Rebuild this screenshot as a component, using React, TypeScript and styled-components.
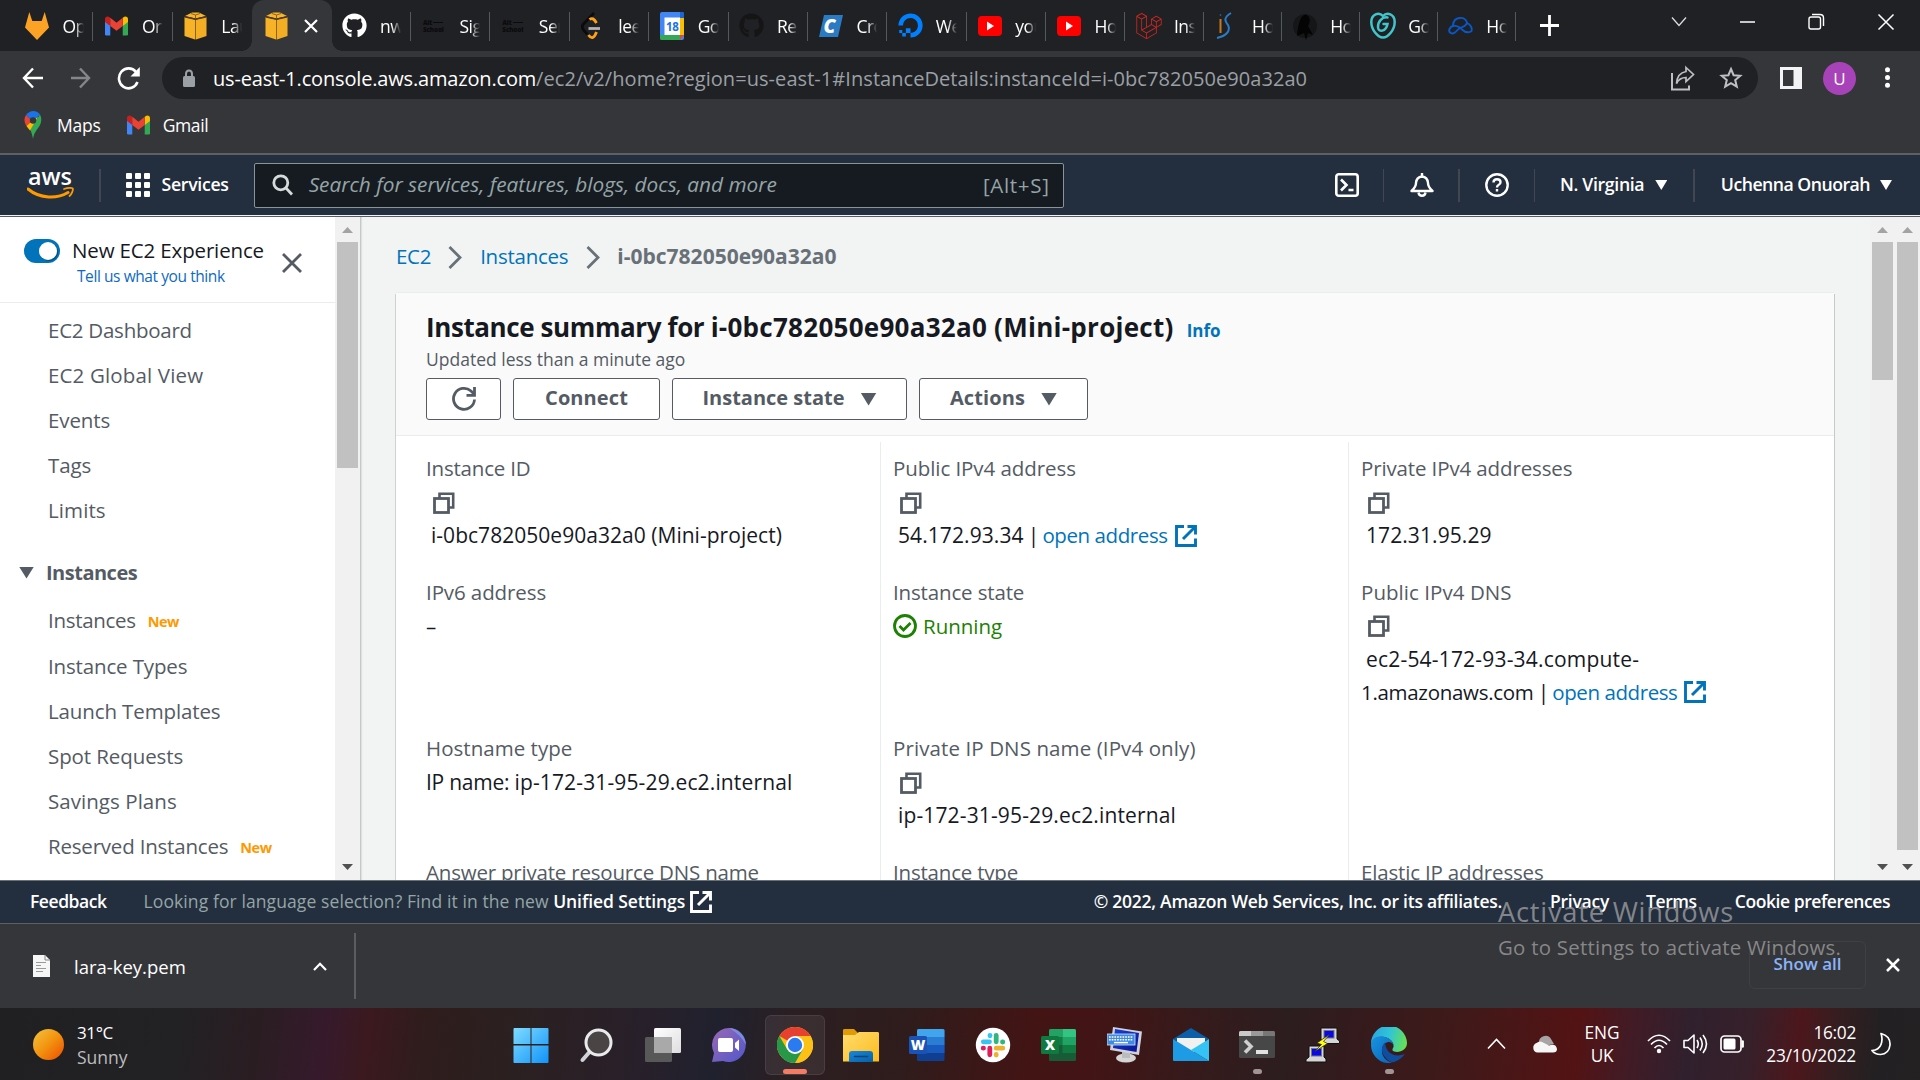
import React from 'react';
import styled, { createGlobalStyle, css } from 'styled-components';
import { FaGithub, FaDigitalOcean, FaLaravel } from 'react-icons/fa';

const Global = createGlobalStyle`
  *, *::before, *::after { box-sizing: border-box; }
  html, body { margin: 0; padding: 0; overflow: hidden; }
  body { font-family: "Open Sans", "Noto Sans", sans-serif; }
  svg { display: block; flex: none; }
`;

const Screen = styled.div`
  position: relative;
  width: 1920px;
  height: 1080px;
  overflow: hidden;
  display: flex;
  flex-direction: column;
  background: #202124;
`;

const T = styled.span<{ $s?: number; $ls?: number; $w?: number; $c?: string; $italic?: boolean; $ml?: number }>`
  font-size: ${p => p.$s ?? 20.5}px;
  letter-spacing: ${p => p.$ls ?? 0}px;
  font-weight: ${p => p.$w ?? 400};
  margin-left: ${p => p.$ml ?? 0}px;
  white-space: pre;
  ${p => p.$c && css`color: ${p.$c};`}
  ${p => p.$italic && css`font-style: italic;`}
`;

const Gap = styled.i<{ $w: number }>`flex: none; width: ${p => p.$w}px;`;

/* ---------- browser chrome ---------- */

const TabStrip = styled.div`
  height: 51px;
  flex: none;
  display: flex;
  padding-left: 14px;
  background: #202124;
  color: #fff;
`;

const Tab = styled.div<{ $w: number; $active?: boolean; $line: boolean }>`
  position: relative;
  flex: none;
  width: ${p => p.$w}px;
  height: 51px;
  display: flex;
  align-items: center;
  gap: 13px;
  padding-left: 10.5px;
  ${p => p.$active && css`
    gap: 15px;
    padding-left: 12px;
    background: #35363a;
    border-radius: 12px 12px 0 0;
    &::before, &::after {
      content: '';
      position: absolute;
      bottom: 0;
      width: 10px;
      height: 10px;
    }
    &::before { left: -10px; background: radial-gradient(circle at 0 0, transparent 9.5px, #35363a 10px); }
    &::after { right: -10px; background: radial-gradient(circle at 100% 0, transparent 9.5px, #35363a 10px); }
  `}
  ${p => p.$line && css`
    &::after {
      content: '';
      position: absolute;
      right: 0;
      top: 12px;
      width: 1px;
      height: 29px;
      background: #55585c;
    }
  `}
`;

const TabIcon = styled.div`
  width: 25px;
  height: 28px;
  flex: none;
  display: grid;
  place-items: center;
`;

const TabTitle = styled.div`
  width: 21px;
  overflow: hidden;
  white-space: nowrap;
  font-size: 17.5px;
  letter-spacing: -0.5px;
  mask-image: linear-gradient(90deg, #000 55%, transparent 100%);
`;

const NewTab = styled.div`
  display: flex;
  align-items: center;
  margin-left: 24px;
`;

const WindowControls = styled.div`
  margin-left: auto;
  display: flex;
  align-items: flex-start;
  gap: 45px;
  padding: 10px 22px 0 0;
`;

const Toolbar = styled.div`
  height: 54px;
  flex: none;
  display: flex;
  align-items: center;
  padding: 0 27px 0 20px;
  background: #35363a;
`;

const NavButtons = styled.div`
  display: flex;
  align-items: center;
  gap: 24px;
  width: 142px;
`;

const Omnibox = styled.div`
  width: 1596px;
  height: 42px;
  display: flex;
  align-items: center;
  padding: 0 15px 0 20px;
  border-radius: 21px;
  background: #202124;
  color: #fff;
`;

const OmniActions = styled.div`
  margin-left: auto;
  display: flex;
  align-items: center;
  gap: 24px;
`;

const ToolbarEnd = styled.div`
  margin-left: auto;
  display: flex;
  align-items: center;
`;

const Avatar = styled.div`
  width: 33px;
  height: 33px;
  margin: 0 26px 0 21px;
  border-radius: 50%;
  display: grid;
  place-items: center;
  background: #a842b8;
  color: #fff;
  font-size: 17px;
`;

const Bookmarks = styled.div`
  height: 50px;
  flex: none;
  display: flex;
  align-items: center;
  padding: 0 0 8px 24px;
  border-bottom: 2px solid #5f6063;
  background: #35363a;
  color: #fff;
`;

const Bookmark = styled.div<{ $gap: number }>`
  display: flex;
  align-items: center;
  gap: ${p => p.$gap}px;
  margin-right: 26px;
`;

/* ---------- AWS header ---------- */

const AwsNav = styled.header`
  height: 60px;
  flex: none;
  display: flex;
  align-items: center;
  padding: 0 28px 0 27px;
  background: #232f3e;
  color: #fff;
  & > span, & > div > span { position: relative; top: -1px; }
`;

const NavRule = styled.div<{ $l?: number; $r?: number }>`
  width: 1.5px;
  height: 33px;
  margin: 0 ${p => p.$r ?? 25}px 0 ${p => p.$l ?? 25}px;
  background: #414750;
`;

const ServiceGrid = styled.div`
  display: grid;
  grid-template-columns: repeat(3, 6px);
  grid-template-rows: repeat(3, 6px);
  gap: 3px;
  & > i { background: #fff; border-radius: 1px; }
`;

const SearchBox = styled.div`
  width: 810px;
  height: 45px;
  display: flex;
  align-items: center;
  margin-left: 25px;
  padding: 0 13px 0 17px;
  border: 1px solid #879596;
  border-radius: 2px;
  background: #161b22;
  color: #95a5a6;
`;

const Push = styled.div`margin-left: auto; display: flex; align-items: center;`;

const Down = styled.i<{ $w?: number; $h?: number; $ml?: number }>`
  width: ${p => p.$w ?? 12}px;
  height: ${p => p.$h ?? 10}px;
  margin-left: ${p => p.$ml ?? 0}px;
  background: currentColor;
  clip-path: polygon(0 0, 100% 0, 50% 100%);
`;

const NavEdge = styled.div`
  height: 2px;
  flex: none;
  border-top: 1px solid #f2f3f3;
  background: #545b64;
`;

/* ---------- body ---------- */

const Body = styled.div`
  height: 663px;
  flex: none;
  display: flex;
  overflow: hidden;
  background: #f2f3f3;
`;

const Sidebar = styled.aside`
  width: 335px;
  background: #fff;
  color: #545b64;
`;

const SideHead = styled.div`
  height: 86px;
  display: flex;
  align-items: flex-start;
  padding: 22px 0 0 24px;
  border-bottom: 1px solid #eaeded;
`;

const Toggle = styled.div`
  width: 36px;
  height: 24px;
  border-radius: 12px;
  background: #0073bb;
  padding: 3px;
  display: flex;
  justify-content: flex-end;
  & > i { width: 18px; height: 18px; border-radius: 50%; background: #fff; box-shadow: 1px 1px 1px rgba(0,0,0,.35); }
`;

const SideTitles = styled.div`
  width: 198px;
  margin: -2px 0 0 12px;
  display: flex;
  flex-direction: column;
  line-height: 26px;
  & > span { height: 26px; }
`;

const SideClose = styled.div`margin: 14px 0 0 12px;`;

const SideList = styled.nav`
  padding-top: 4px;
`;

const SideRow = styled.div<{ $h?: number }>`
  height: ${p => p.$h ?? 45}px;
  display: flex;
  align-items: center;
  padding-left: 48px;
`;

const SideGroup = styled.div`
  height: 47px;
  margin-top: 17px;
  display: flex;
  align-items: center;
  padding-left: 19px;
  gap: 12px;
`;

const NewTag = styled.span`
  margin: 3px 0 0 12px;
  font-size: 14.5px;
  font-weight: 700;
  letter-spacing: -0.5px;
  color: #ff9900;
`;

const Track = styled.div<{ $edge?: boolean }>`
  width: 25px;
  flex: none;
  display: flex;
  flex-direction: column;
  align-items: center;
  background: #f1f1f1;
  ${p => p.$edge && css`width: 26px; border-right: 1px solid #c3c9c9; box-shadow: 1px 0 1px rgba(0,0,0,.08);`}
`;

const Arrow = styled.i<{ $down?: boolean }>`
  width: 11px;
  height: 6px;
  margin: ${p => (p.$down ? 'auto 0 10px' : '10px 0 9px')};
  background: ${p => (p.$down ? '#505050' : '#a3a3a3')};
  clip-path: ${p => (p.$down ? 'polygon(0 0, 100% 0, 50% 100%)' : 'polygon(50% 0, 100% 100%, 0 100%)')};
`;

const Thumb = styled.i<{ $h: number }>`
  width: 21px;
  height: ${p => p.$h}px;
  background: #c1c1c1;
`;

const Content = styled.main`
  flex: 1;
  overflow: hidden;
  padding: 20px 36px 0 35px;
`;

const Crumbs = styled.div`
  height: 40px;
  display: flex;
  align-items: center;
  color: #0073bb;
  & > span { margin-top: -2px; }
`;

const Card = styled.section`
  height: 700px;
  margin-top: 15px;
  background: #fff;
  border-top: 1px solid #eaeded;
  box-shadow: -1px 2px 0 #ccd3d3, 1px 2px 0 #c3cacb;
`;

const CardHead = styled.div`
  height: 143px;
  padding: 16px 0 0 30px;
  background: #fafafa;
  border-bottom: 1px solid #eaeded;
`;

const TitleLine = styled.div`
  height: 36px;
  display: flex;
  align-items: baseline;
  line-height: 36px;
  color: #16191f;
`;

const Updated = styled.div`
  height: 28px;
  line-height: 28px;
  color: #545b64;
`;

const Buttons = styled.div`
  display: flex;
  gap: 12px;
  padding-top: 5px;
`;

const Button = styled.div<{ $w: number }>`
  width: ${p => p.$w}px;
  height: 42px;
  display: flex;
  align-items: center;
  justify-content: center;
  border: 1.5px solid #545b64;
  border-radius: 3px;
  background: #fff;
  color: #545b64;
  & > span { margin-top: -3px; }
`;

const Columns = styled.div`
  display: grid;
  grid-template-columns: 467px 468px 467px;
  padding: 6px 0 0 17px;
`;

const Column = styled.div<{ $first?: boolean }>`
  height: 500px;
  display: grid;
  align-content: start;
  grid-template-rows: 99.5px 132.5px 99.5px 99px;
  row-gap: 24px;
  padding: 11px 0 0 13px;
  ${p => !p.$first && css`padding-left: 12px; border-left: 1px solid #eaeded;`}
`;

const Pair = styled.div`
  line-height: 33px;
  color: #16191f;
  & > div { height: 33px; display: flex; align-items: center; white-space: pre; }
`;

const Label = styled.div`color: #545b64; padding-bottom: 2px;`;
const IconLine = styled.div`padding-left: 7px;`;

/* ---------- footer, downloads ---------- */

const Footer = styled.footer`
  height: 43px;
  flex: none;
  display: flex;
  align-items: center;
  padding: 0 30px;
  border-top: 1px solid #687078;
  background: #232f3e;
  color: #fff;
  & span { position: relative; top: -1px; }
`;

const Downloads = styled.div`
  height: 85px;
  flex: none;
  display: flex;
  align-items: center;
  padding: 0 20px 0 33px;
  border-top: 1px solid #5f6063;
  background: #35363a;
  color: #fff;
`;

const DownloadItem = styled.div`
  width: 323px;
  height: 66px;
  display: flex;
  align-items: center;
  border-right: 2px solid #5c5d61;
`;

const CaretSlot = styled.div`margin: 0 27px 0 auto;`;

const ShowAll = styled.div`
  margin-left: auto;
  width: 117px;
  height: 48px;
  display: grid;
  place-items: center;
  padding-bottom: 3px;
  margin-top: -3px;
  border: 1px solid #3f4044;
  border-radius: 6px;
  color: #8ab4f8;
`;

const CloseShelf = styled.div`margin: -2px 0 0 20px;`;

const Watermark = styled.div`
  position: absolute;
  left: 1498px;
  top: 894px;
  display: flex;
  flex-direction: column;
  color: rgba(158, 158, 158, .8);
  line-height: 36px;
  & > span + span { margin-top: -1px; }
`;

/* ---------- taskbar ---------- */

const Taskbar = styled.div`
  height: 72px;
  flex: none;
  display: flex;
  align-items: center;
  padding: 0 29px 0 33px;
  color: #fff;
  background: linear-gradient(97deg,
    #202023 0, #222124 180px, #2a1d22 260px, #361a2c 325px, #3b191e 370px, #2e1d1c 430px,
    #2b2021 520px, #28202a 640px, #20212e 715px, #2b1f22 790px, #2f1c1c 900px, #431414 1030px,
    #421415 1090px, #371a1b 1180px, #2c1d1f 1280px, #371a1c 1370px, #3d1a1a 1430px, #531314 1570px,
    #421b25 1620px, #30202d 1680px, #36202a 1740px, #4c171c 1790px, #331e20 1830px, #222022 1870px, #232122 1920px);
`;

const Sun = styled.div`
  width: 31px;
  height: 31px;
  border-radius: 50%;
  background: linear-gradient(135deg, #f2bb35 10%, #f2930f 50%, #ec5a05 90%);
`;

const Weather = styled.div`
  width: 424px;
  margin-left: 13px;
  padding-top: 2px;
  display: flex;
  flex-direction: column;
  line-height: 24px;
`;

const Apps = styled.div`
  display: flex;
  gap: 6px;
`;

const AppButton = styled.div<{ $active?: boolean }>`
  position: relative;
  width: 60px;
  height: 60px;
  margin-top: 2px;
  display: grid;
  place-items: center;
  border-radius: 6px;
  border: 1px solid transparent;
  ${p => p.$active && css`background: rgba(255,255,255,.07); border-color: rgba(255,255,255,.08);`}
`;

const Indicator = styled.i<{ $active?: boolean }>`
  position: absolute;
  bottom: 0;
  left: calc(50% - ${p => (p.$active ? 12 : 4.5)}px);
  width: ${p => (p.$active ? 24 : 9)}px;
  height: 5px;
  border-radius: 3px;
  background: ${p => (p.$active ? '#f47c64' : '#a39494')};
`;

const Tray = styled.div`
  margin-left: auto;
  display: flex;
  align-items: center;
`;

const Stack = styled.div<{ $align: string; $w: number; $ml: number }>`
  width: ${p => p.$w}px;
  margin-left: ${p => p.$ml}px;
  display: flex;
  flex-direction: column;
  align-items: ${p => p.$align};
  line-height: 23px;
`;

/* ---------- icons ---------- */

const Fox = () => (
  <svg width="24" height="28" viewBox="0 0 24 28">
    <path d="M4.300 0 L7.300 9 H16.700 L19.700 0 L24 15.500 L12 28 L0 15.500 Z" fill="#fca326" />
  </svg>
);
const Gmail = () => (
  <svg width="23" height="20" viewBox="0 0 24 20">
    <path d="M1.500 20 H5.500 V9 L0 5 V18.500 Q0 20 1.500 20Z" fill="#4285f4" />
    <path d="M22.500 20 H18.500 V9 L24 5 V18.500 Q24 20 22.500 20Z" fill="#34a853" />
    <path d="M5.500 10 L0 5.800 V3 C0 0 3 -.500 5 1 L5.500 1.500Z" fill="#c5221f" />
    <path d="M18.500 10 L24 5.800 V3 C24 0 21 -.500 19 1 L18.500 1.500Z" fill="#fbbc04" />
    <path d="M5.500 1.400 L12 6.500 L18.500 1.400 V10 L12 15 L5.500 10Z" fill="#ea4335" />
  </svg>
);
const Cube = () => (
  <svg width="23" height="28" viewBox="0 0 23 28">
    <path d="M.500 5 L11 7.500 V27.500 L.500 24Z" fill="#f7b227" />
    <path d="M22.500 5 L12 7.500 V27.500 L22.500 24Z" fill="#f3ae24" />
    <path d="M1 4 L8 .500 H15 L22 4 L11.500 6.500Z" fill="#f7b52f" />
    <path d="M11.500 7 V27.500" stroke="#8a631a" strokeWidth="1" />
    <path d="M.500 4.700 L11.500 7.300 L22.500 4.700" stroke="#4c3a16" strokeWidth="1.500" fill="none" />
    <path d="M7 1.500 L11.500 3 L16 1.500 M11.500 3 V6.500" stroke="#8a631a" strokeWidth="1" fill="none" />
  </svg>
);
const Cross = ({ s = 13, w = 2.4, c = '#fff' }: { s?: number; w?: number; c?: string }) => (
  <svg width={s} height={s} viewBox={`0 0 ${s} ${s}`}>
    <path d={`M1 1 L${s - 1} ${s - 1} M${s - 1} 1 L1 ${s - 1}`} stroke={c} strokeWidth={w} fill="none" />
  </svg>
);
const AltIcon = styled.div`
  width: 22px;
  display: flex;
  flex-direction: column;
  font-size: 6.5px;
  line-height: 7px;
  font-weight: 800;
  letter-spacing: -0.2px;
  color: #0b0b0d;
  & > span::after { content: ''; display: inline-block; width: 10px; height: 1px; margin: 0 0 2px 1px; background: #0b0b0d; }
`;
const Alt = () => <AltIcon><span>Alt</span>School</AltIcon>;
const Leet = () => (
  <svg width="24" height="28" viewBox="0 0 24 28" fill="none" strokeWidth="2.800">
    <path d="M13 1 L2.500 12 Q0 14.500 2.500 18 L6.500 22.500" stroke="#0b0b0b" />
    <path d="M8.500 7.500 Q12 4.500 15.500 11" stroke="#ffa116" />
    <path d="M7.500 23 Q12 29.500 15.500 20" stroke="#ffa116" />
    <path d="M7.500 16.500 H19" stroke="#b3b3b3" />
  </svg>
);
const Cal = () => (
  <svg width="24" height="28" viewBox="0 0 24 28">
    <rect width="24" height="28" rx="2" fill="#4285f4" />
    <path d="M20 0 H22 Q24 0 24 2 V6 H20Z" fill="#1967d2" />
    <rect x="20" y="6" width="4" height="17" fill="#fbbc04" />
    <path d="M0 23 H20 V28 H2 Q0 28 0 26Z" fill="#34a853" />
    <path d="M20 23 H24 L20 28Z" fill="#ea4335" />
    <rect x="4.500" y="5.500" width="15.500" height="17.500" fill="#fff" />
    <text x="12.200" y="18.500" textAnchor="middle" fontSize="11.500" fontWeight="700" letterSpacing="-.4" fill="#1a73e8" fontFamily="Open Sans">18</text>
  </svg>
);
const Cpanel = () => (
  <svg width="24" height="22" viewBox="0 0 24 22">
    <path d="M5 0 H24 L19 22 H0Z" fill="#2b7bc2" />
    <text x="10.500" y="17.500" textAnchor="middle" fontSize="19" fontWeight="800" fontStyle="italic" fill="#fff" fontFamily="Open Sans">C</text>
  </svg>
);
const Tube = () => (
  <svg width="24" height="20" viewBox="0 0 24 20">
    <rect width="24" height="20" rx="4" fill="#f00" /><path d="M9 5.500 L16 10 L9 14.500Z" fill="#fff" />
  </svg>
);
const Js = () => (
  <svg width="24" height="28" viewBox="0 0 24 28" fill="none" strokeWidth="2">
    <path d="M16 1 C8 6 10 9 13 13 C16 19 11 24 2 26" stroke="#2a7ac6" />
    <path d="M5.500 7 V21" stroke="#c37a1e" /><circle cx="5.500" cy="3" r=".8" fill="#2a7ac6" stroke="none" />
  </svg>
);
const Bird = () => (
  <svg width="24" height="28" viewBox="0 0 24 28">
    <circle cx="12" cy="14" r="12" fill="#151618" />
    <path d="M8 6 Q12 0 16 5 Q18 9 15 14 L20 23 L15 21 L13 28 L11 21 L4 24 Q5 12 8 6Z" fill="#040404" />
  </svg>
);
const Heart = () => (
  <svg width="26" height="27" viewBox="0 0 26 27" fill="none" stroke="#41c4cb" strokeWidth="2.500" strokeLinecap="round">
    <path d="M13 4 C9 -.500 1.300 2 1.300 10 C1.300 18 8 25.500 13 25.500 C18 25.500 24.700 18 24.700 10 C24.700 2 17 -.500 13 4Z" />
    <path d="M17.500 5.500 C12 4.500 7.500 10 8 15.500 C8.500 20.500 16 20 17.500 12 H13.500" />
  </svg>
);
const Wave = () => (
  <svg width="25" height="18" viewBox="0 0 25 18" fill="none" stroke="#0a57c7" strokeWidth="1.900" strokeLinecap="round">
    <path d="M5 8 C6 -1 17 -1 19 5.500 C18 11 12 9 8.500 14 C5 18.500 0 16 1.500 12 C4 6.500 11 9 14 12.500 C17 15.500 20 16 23 14.500 M19 6 C22.500 7.500 24.500 11 23.500 14" />
  </svg>
);
const ShareIcon = () => (
  <svg width="24" height="26" viewBox="0 0 24 26" fill="none" stroke="#bdc1c6" strokeWidth="2">
    <path d="M1 8 V24.500 H18 V20.500" />
    <path d="M15 2.500 L22.500 9.500 L15 16.500 V12.500 C10 12.500 7.500 14.500 5.500 18.500 C6 12 9 7.500 15 6.500Z" strokeWidth="1.700" />
  </svg>
);
const Pin = () => (
  <svg width="18" height="28" viewBox="0 0 18 28">
    <path d="M2 4 C6 -1.300 13 -1 16 3.500 L9 11Z" fill="#1a73e8" />
    <path d="M2 4 L8 10 L2.500 15 C.800 12.500 .500 10.500 .500 8.500 C.500 7 1 5.500 2 4Z" fill="#ea4335" />
    <path d="M16 3.500 C18 7 17.600 11.500 15.500 15 C12 20 10 22 9 28 C8.300 24 7.500 21 6 18.500Z" fill="#34a853" />
    <path d="M8 10 L14 6 L6 19.500 C4.500 17.500 3.300 16.500 2.500 15Z" fill="#fbbc04" />
    <circle cx="9" cy="9.500" r="3.200" fill="#35363a" />
  </svg>
);
const Ext = ({ c = '#0073bb' }: { c?: string }) => (
  <svg width="22" height="22" viewBox="0 0 22 22" fill="none" stroke={c} strokeWidth="2.900">
    <path d="M9 1.500 H1.500 V20.500 H20.500 V13.500" />
    <path d="M12.500 1.500 H20.500 V9.500 M20 2 L8 14" />
  </svg>
);
const Copy = () => (
  <svg width="22" height="22" viewBox="0 0 22 22" fill="none" stroke="#545b64">
    <path d="M6.500 6 V1.800 H20.200 V15.500 H16" strokeWidth="2.600" />
    <rect x="1.500" y="6.500" width="14" height="14" strokeWidth="2.800" />
  </svg>
);
const Chev = () => (
  <svg width="14" height="23" viewBox="0 0 14 23" fill="none" stroke="#687078" strokeWidth="2.800"><path d="M1.500 1 L12 11.500 L1.500 22" /></svg>
);

const tabs: { icon: React.ReactNode; title?: string; active?: boolean }[] = [
  { icon: <Fox />, title: 'Ope' }, { icon: <Gmail />, title: 'Orb' }, { icon: <Cube />, title: 'Lau' },
  { icon: <Cube />, active: true }, { icon: <FaGithub size={25} color="#fff" />, title: 'nwa' },
  { icon: <Alt />, title: 'Sig' }, { icon: <Alt />, title: 'Ser' }, { icon: <Leet />, title: 'leet' },
  { icon: <Cal />, title: 'Goo' }, { icon: <FaGithub size={25} color="#151515" />, title: 'Rep' },
  { icon: <Cpanel />, title: 'Cro' }, { icon: <FaDigitalOcean size={25} color="#0080ff" />, title: 'Wel' },
  { icon: <Tube />, title: 'you' }, { icon: <Tube />, title: 'How' },
  { icon: <FaLaravel size={26} color="#d3281f" />, title: 'Inst' }, { icon: <Js />, title: 'How' },
  { icon: <Bird />, title: 'How' }, { icon: <Heart />, title: 'Goo' }, { icon: <Wave />, title: 'Hos' },
];

const G = ({ id, a, b }: { id: string; a: string; b: string }) => (
  <linearGradient id={id} x1="0" y1="0" x2="1" y2="1"><stop offset="0" stopColor={a} /><stop offset="1" stopColor={b} /></linearGradient>
);
const Ico = ({ children }: { children: React.ReactNode }) => <svg width="36" height="36" viewBox="0 0 36 36">{children}</svg>;

const apps: { el: React.ReactNode; on?: boolean; active?: boolean }[] = [
  { el: <Ico><defs><G id="win" a="#7fdcff" b="#1193f8" /></defs>
    <path d="M1.500 1 H17.500 V17 H.500 V2 Q.500 1 1.500 1Z M18.500 1 H34.500 Q35.500 1 35.500 2 V17 H18.500Z M.500 18.500 H17.500 V36 H1.500 Q.500 36 .500 35Z M18.500 18.500 H35.500 V35 Q35.500 36 34.500 36 H18.500Z" fill="url(#win)" /></Ico> },
  { el: <Ico><path d="M10.500 25 L3.500 33" stroke="#cfd2d6" strokeWidth="4" strokeLinecap="round" /><circle cx="19.500" cy="15.500" r="12.500" fill="#4a4445" stroke="#e9eaec" strokeWidth="3" /></Ico> },
  { el: <Ico><defs><G id="tv" a="#fff" b="#dedede" /></defs><rect x="9" y="1" width="27" height="25" rx="1.500" fill="url(#tv)" /><rect x="0" y="10" width="27" height="25" rx="1.500" fill="#5c5c5c" opacity=".93" /><rect x="9" y="10" width="18" height="16" fill="#a9a9a9" /></Ico> },
  { el: <Ico><defs><G id="ch" a="#9a68b4" b="#5058cc" /></defs>
    <path d="M18 1 A17 17 0 1 1 12 34 L1 35 L3 26 A17 17 0 0 1 18 1Z" fill="url(#ch)" /><path d="M18 1 A17 17 0 0 1 35 18 Q30 8 18 1Z" fill="#7d9cf0" opacity=".7" />
    <rect x="7" y="11" width="15" height="14" rx="2" fill="#fff" /><path d="M24 16 L28 12.500 V24 L24 20.500Z" fill="#fff" /></Ico> },
  { active: true, el: <Ico>
    <circle cx="18" cy="18" r="18" fill="#fbc116" />
    <path d="M18 18 L2.400 9 A18 18 0 0 1 33.600 9 Z" fill="#e8402f" />
    <path d="M18 9 H33.600 A18 18 0 0 1 18 36 L25.800 22.500 Z" fill="#fbc116" />
    <path d="M2.400 9 L10.200 22.500 L18 27 L25.800 22.500 L18 36 A18 18 0 0 1 2.400 9Z" fill="#279847" />
    <circle cx="18" cy="18" r="9" fill="#fff" /><circle cx="18" cy="18" r="7.200" fill="#2a7bf0" /></Ico> },
  { el: <Ico><defs><G id="fo" a="#ffdc6f" b="#fdbb1c" /><G id="fb" a="#1b87d8" b="#0561a8" /></defs>
    <path d="M0 3 Q0 2 1.500 2 H11 L15 6 V10 H0Z" fill="#e09a05" /><path d="M0 8 H12 L16 5 H35 Q36 5 36 6.500 V34.500 H0Z" fill="url(#fo)" />
    <path d="M6 35 V27 Q6 24 9 24 H27 Q30 24 30 27 V35Z" fill="url(#fb)" /><path d="M11.500 29.500 H24.500" stroke="#06427c" strokeWidth="1.500" strokeLinecap="round" /></Ico> },
  { el: <Ico><rect x="8" y="2" width="27.500" height="32" rx="1.500" fill="#103f91" /><path d="M8 3.500 Q8 2 9.500 2 H34 Q35.500 2 35.500 3.500 V10 H8Z" fill="#41a5ee" /><rect x="8" y="10" width="27.500" height="8" fill="#2b7cd3" /><rect x="8" y="18" width="27.500" height="8" fill="#185abd" />
    <rect x="0" y="9" width="18" height="18" rx="1.500" fill="#1a52b5" /><text x="9" y="23" fontSize="14" fontWeight="800" textAnchor="middle" fill="#fff" fontFamily="Open Sans">W</text></Ico> },
  { el: <Ico><circle cx="18" cy="18" r="17.200" fill="#fff" />
    <g strokeWidth="4.800" strokeLinecap="round" fill="none">
      <path d="M8.300 14.800 H14.500 M15 8.800 V8.300" stroke="#36c5f0" /><path d="M21.200 8.300 V14.800 M27.500 15 H27.800" stroke="#2eb67d" />
      <path d="M21.200 21.200 H27.800 M21.200 27.500 V28" stroke="#ecb22e" /><path d="M14.800 21.200 V27.800 M8.500 21.200 H8.200" stroke="#e01e5a" />
    </g></Ico> },
  { el: <Ico><rect x="8" y="2" width="27" height="32" rx="1.500" fill="#185c37" /><path d="M8 3.500 Q8 2 9.500 2 H21.500 V10 H8Z" fill="#21a366" /><path d="M21.500 2 H33.500 Q35 2 35 3.500 V10 H21.500Z" fill="#33c481" /><rect x="8" y="10" width="13.500" height="8" fill="#107c41" /><rect x="21.500" y="10" width="13.500" height="8" fill="#21a366" /><rect x="21.500" y="18" width="13.500" height="8" fill="#107c41" />
    <rect x="0" y="9" width="18" height="18" rx="1.500" fill="#0e7a3f" /><text x="9" y="23" fontSize="14" fontWeight="800" textAnchor="middle" fill="#fff" fontFamily="Open Sans">X</text></Ico> },
  { el: <Ico><defs><G id="osk" a="#1a3fd8" b="#0a1490" /></defs><ellipse cx="19" cy="31" rx="10" ry="4.500" fill="#d5d5d5" /><path d="M15 25 H23 V31 H15Z" fill="#bbb" />
    <path d="M6 0 L35 4.500 L32 28 L3 23Z" fill="#cfd2d8" /><path d="M8 2 L32 6 L29.500 25 L6 21Z" fill="url(#osk)" />
    <rect x="0" y="7" width="28" height="11" fill="#3f8be0" stroke="#d8e8f8" strokeWidth=".800" /><path d="M2 10 H26 M2 12.700 H26" stroke="#fff" strokeWidth="1.500" strokeDasharray="1.700 1" /><path d="M7 15.600 H21" stroke="#fff" strokeWidth="1.500" /></Ico> },
  { el: <Ico><path d="M0 12 L18 1 L36 12 L18 22Z" fill="#0b5ea8" /><path d="M4 11 H32 V20 L18 26 L4 20Z" fill="#f1f1f1" /><path d="M0 12 L36 34 H1 Q0 34 0 33Z" fill="#1d9be4" /><path d="M36 12 L18 23 L36 34Z" fill="#35c3f5" /></Ico> },
  { on: true, el: <Ico><rect x="0" y="4" width="36" height="27" rx="1.500" fill="#474747" /><path d="M0 9 V5.500 Q0 4 1.500 4 H12 V9Z" fill="#cacaca" /><rect x="12" y="4" width="12" height="5" fill="#9a9a9a" /><path d="M24 4 H34.500 Q36 4 36 5.500 V9 H24Z" fill="#777" />
    <path d="M6 13.500 L12 19.500 L6 25.500" stroke="#cfcfcf" strokeWidth="3.600" fill="none" /><rect x="17" y="23" width="12" height="4" fill="#e2e2e2" /></Ico> },
  { el: <Ico>
    <g><path d="M16 1 H32 V12 L34.500 14 V16.500 H17 V13 H16Z" fill="#d6d6d6" stroke="#111" strokeWidth="1" /><rect x="19" y="3.500" width="10" height="7.500" fill="#0808f0" stroke="#777" /></g>
    <g><path d="M4 19 H19 V30 L21 32 V35 H1 V32.500 L4 30Z" fill="#d6d6d6" stroke="#111" strokeWidth="1" /><rect x="6.500" y="21.500" width="10" height="7.500" fill="#0808f0" stroke="#777" /></g>
    <path d="M25 7 L12 16 L16.500 17.500 L9 25 L22.500 16.500 L18.500 14.500Z" fill="#ffff10" stroke="#222" strokeWidth=".700" /></Ico> },
  { on: true, el: <Ico><defs><linearGradient id="ed" x1="0" y1=".3" x2="1" y2=".5"><stop offset="0" stopColor="#2aa5e0" /><stop offset=".5" stopColor="#30c5d6" /><stop offset="1" stopColor="#66e052" /></linearGradient><G id="ed2" a="#1795e0" b="#0a62b8" /></defs>
    <path d="M0 17 A18 18 0 0 1 36 16 C36 23 29 26 23 24.500 C20.500 23.700 21.500 22 22.500 20 C23.500 14 16 9 9 10 C4 11 1 14 0 17Z" fill="url(#ed)" />
    <path d="M0 18 C0 12 6 8.500 12 9.500 C18 10.500 22 14 22.500 18 C20 12.500 12 15 11 22 C10 29 15 34 21 35.700 C9 38 0 28 0 18Z" fill="url(#ed2)" />
    <path d="M14 15.500 C10 19 10 25 13.500 29.500 C17 34 21 36 23 35 C28 33.500 32 30 33.500 27 C27 30 15 29 14 15.500Z" fill="#0f4e9e" /></Ico> },
];

const Item = ({ label, ls = -0.2, children }: { label: string; ls?: number; children?: React.ReactNode }) => (
  <Pair><Label><T $ls={ls}>{label}</T></Label>{children}</Pair>
);
const CopyLine = () => <IconLine><Copy /></IconLine>;

const side: [string, number][] = [['EC2 Dashboard', -0.25], ['EC2 Global View', 0.15], ['Events', -0.1], ['Tags', -0.1], ['Limits', 0.1]];
const side2: [string, number, boolean?][] = [['Instances', -0.3, true], ['Instance Types', -0.15], ['Launch Templates', -0.12], ['Spot Requests', -0.1], ['Savings Plans', 0.05], ['Reserved Instances', -0.2, true]];

export default function App() {
  return (
    <Screen>
      <Global />
      <TabStrip>
        {tabs.map((t, i) => (
          <Tab key={i} $w={i < 14 ? 79.4 : 78.1} $active={t.active} $line={!t.active && i !== 2 && i !== 3}>
            <TabIcon>{t.icon}</TabIcon>
            {t.title ? <TabTitle>{t.title}</TabTitle> : <Cross s={14} w={2.2} />}
          </Tab>
        ))}
        <NewTab><svg width="19" height="21" viewBox="0 0 19 21"><path d="M0 10.500H19M9.500 0V21" stroke="#fff" strokeWidth="2.800" /></svg></NewTab>
        <WindowControls>
          <svg width="24" height="24" viewBox="0 0 24 24" fill="none" stroke="#ddd" strokeWidth="1.300"><path d="M5 7.500 L12 15.500 L19 7.500" /></svg>
          <svg width="24" height="24" viewBox="0 0 24 24"><path d="M4 12H19" stroke="#fff" strokeWidth="1.500" /></svg>
          <svg width="24" height="24" viewBox="0 0 24 24" fill="none" stroke="#fff" strokeWidth="1.400"><rect x="4" y="7" width="11.500" height="12" rx="2" /><path d="M7 4.500 H15 Q18.500 4.500 18.500 8 V16" /></svg>
          <svg width="24" height="24" viewBox="0 0 24 24"><path d="M4.500 4.500 L19.500 19.500 M19.500 4.500 L4.500 19.500" stroke="#fff" strokeWidth="1.500" /></svg>
        </WindowControls>
      </TabStrip>
      <Toolbar>
        <NavButtons>
          <svg width="24" height="24" viewBox="0 0 24 24" fill="none" stroke="#fff" strokeWidth="2.400"><path d="M23 12 H4.500 M13 2.500 L4 12 L13 21.500" /></svg>
          <svg width="24" height="24" viewBox="0 0 24 24" fill="none" stroke="#85868a" strokeWidth="2.400"><path d="M3 12 H21 M12 2.500 L21 12 L12 21.500" /></svg>
          <svg width="24" height="24" viewBox="0 0 24 24" fill="none" stroke="#fff" strokeWidth="2.600"><path d="M21.500 16 A9.600 10 0 1 1 20 6" /><path d="M23.800 1 V10.500 H14.500Z" fill="#fff" stroke="none" /></svg>
        </NavButtons>
        <Omnibox>
          <svg width="14" height="18" viewBox="0 0 14 18"><rect x="1" y="7" width="12" height="11" rx="1.500" fill="#9aa0a6" /><path d="M4 8 V5 Q4 1.500 7 1.500 Q10 1.500 10 5 V8" stroke="#9aa0a6" strokeWidth="2" fill="none" /></svg>
          <T $s={20} $ls={-0.17} $ml={17}>us-east-1.console.aws.amazon.com</T>
          <T $s={20} $ls={0.06} $c="#9aa0a6">/ec2/v2/home?region=us-east-1#InstanceDetails:instanceId=i-0bc782050e90a32a0</T>
          <OmniActions>
            <ShareIcon />
            <svg width="24" height="24" viewBox="0 0 24 24" fill="none" stroke="#bdc1c6" strokeWidth="2"><path d="M12 3 L14.600 9.200 L21.300 9.700 L16.200 14.100 L17.800 20.700 L12 17.100 L6.200 20.700 L7.800 14.100 L2.700 9.700 L9.400 9.200Z" /></svg>
          </OmniActions>
        </Omnibox>
        <ToolbarEnd>
          <svg width="22" height="22" viewBox="0 0 22 22"><rect width="22" height="22" fill="#f1f3f4" /><rect x="3" y="3" width="10.500" height="16" fill="#35363a" /></svg>
          <Avatar>U</Avatar>
          <svg width="11" height="22" viewBox="0 0 11 22" fill="#fff"><circle cx="5.500" cy="2.800" r="2.500" /><circle cx="5.500" cy="10.500" r="2.500" /><circle cx="5.500" cy="18.200" r="2.500" /></svg>
        </ToolbarEnd>
      </Toolbar>
      <Bookmarks>
        <Bookmark $gap={15}><Pin /><T $s={17.5} $ls={-0.2}>Maps</T></Bookmark>
        <Bookmark $gap={13}><Gmail /><T $s={17.5} $ls={-0.4}>Gmail</T></Bookmark>
      </Bookmarks>

      <AwsNav>
        <svg width="48" height="32" viewBox="0 0 48 32">
          <text x="1" y="16" fontSize="23" fontWeight="600" fill="#fff" textLength="44" lengthAdjust="spacingAndGlyphs" fontFamily="Open Sans">aws</text>
          <path d="M1 20 C13 30 30 30 41 23.500" stroke="#ff9900" strokeWidth="3" fill="none" strokeLinecap="round" />
          <path d="M37 20 C41 18.500 45 18.500 45.800 19.500 C46.300 21 44.800 25 42.500 27" stroke="#ff9900" strokeWidth="1.800" fill="none" strokeLinecap="round" />
        </svg>
        <NavRule $l={24} />
        <ServiceGrid>{Array.from({ length: 9 }, (_, i) => <i key={i} />)}</ServiceGrid>
        <T $s={17.7} $w={600} $ls={-0.3} $ml={12}>Services</T>
        <SearchBox>
          <svg width="22" height="22" viewBox="0 0 22 22" fill="none" stroke="#d5dbdb" strokeWidth="2.800"><circle cx="8.800" cy="8.800" r="7" /><path d="M13.500 13.500 L20 20.500" /></svg>
          <T $s={20.8} $italic $ml={15}>Search for services, features, blogs, docs, and more</T>
          <Push><T $s={20.5} $ls={0.7}>[Alt+S]</T></Push>
        </SearchBox>
        <Push>
          <svg width="24" height="24" viewBox="0 0 24 24" fill="none" stroke="#fff" strokeWidth="2.600"><rect x="1.300" y="1.300" width="21.400" height="21.400" rx="2.500" /><path d="M6 6.500 L11.500 12 L6 17.500 M13.500 17 H18.500" /></svg>
          <NavRule $l={24} $r={26} />
          <svg width="24" height="24" viewBox="0 0 24 24" fill="none" stroke="#fff" strokeWidth="2.400"><path d="M1.500 18 Q6 14 6 10 Q6.500 4 12 3.500 Q17.500 4 18 10 Q18 14 22.500 18Z" strokeLinejoin="round" /><path d="M12 0 V4 M8.500 19.500 Q9 22.800 12 22.800 Q15 22.800 15.500 19.500" /></svg>
          <NavRule $l={24} />
          <svg width="24" height="24" viewBox="0 0 24 24" fill="none" stroke="#fff" strokeWidth="2.400"><circle cx="12" cy="12" r="10.700" /><path d="M8.500 9.500 Q8.500 6.200 12 6.200 Q15.500 6.200 15.500 9.200 Q15.500 11 13.500 12 Q12 12.800 12 14.500 M12 16 V18.500" /></svg>
          <NavRule />
          <T $s={17.7} $w={600} $ls={-0.35}>N. Virginia</T><Down $ml={11} />
          <NavRule $l={26} $r={26} />
          <T $s={17.7} $w={600} $ls={-0.52}>Uchenna Onuorah</T><Down $ml={10} />
        </Push>
      </AwsNav>
      <NavEdge />

      <Body>
        <Sidebar>
          <SideHead>
            <Toggle><i /></Toggle>
            <SideTitles>
              <T $ls={-0.15} $c="#16191f">New EC2 Experience</T>
              <T $s={15.5} $ls={-0.42} $ml={5} $c="#0d6ac4">Tell us what you think</T>
            </SideTitles>
            <SideClose><Cross s={20} w={2.8} c="#545b64" /></SideClose>
          </SideHead>
          <SideList>
            {side.map(([t, ls]) => <SideRow key={t}><T $ls={ls}>{t}</T></SideRow>)}
            <SideGroup><Down $w={15} $h={12} /><T $w={700} $s={20} $ls={-0.5}>Instances</T></SideGroup>
            {side2.map(([t, ls, n], i) => <SideRow key={t} $h={i ? 45 : 47}><T $ls={ls}>{t}</T>{n && <NewTag>New</NewTag>}</SideRow>)}
          </SideList>
        </Sidebar>
        <Track $edge><Arrow /><Thumb $h={226} /><Arrow $down /></Track>
        <Content>
          <Crumbs>
            <T $ls={-0.3}>EC2</T><Gap $w={17} /><Chev />
            <T $ml={18} $ls={-0.25}>Instances</T><Gap $w={18} /><Chev />
            <T $ml={17} $s={21} $w={700} $ls={0} $c="#687078">i-0bc782050e90a32a0</T>
          </Crumbs>
          <Card>
            <CardHead>
              <TitleLine>
                <T $s={26} $w={700} $ls={-0.4}>{'Instance summary for '}</T>
                <T $s={26} $w={700} $ls={0.27}>i-0bc782050e90a32a0 (Mini-project)</T>
                <T $s={17} $w={700} $ml={13} $c="#0073bb">Info</T>
              </TitleLine>
              <Updated><T $s={17.5}>Updated less than a minute ago</T></Updated>
              <Buttons>
                <Button $w={75}>
                  <svg width="26" height="26" viewBox="0 0 26 26" fill="none" stroke="#545b64" strokeWidth="2.800"><path d="M23.500 13.500 A10.500 10.500 0 1 1 20 5 L23.500 8.500" /><path d="M23.500 1 V9.300 H15.500" /></svg>
                </Button>
                <Button $w={147}><T $w={700} $s={20} $ls={0.1}>Connect</T></Button>
                <Button $w={235}><T $w={700} $s={20} $ls={0}>Instance state</T><Down $w={16} $h={13} $ml={16} /></Button>
                <Button $w={169}><T $w={700} $s={20} $ls={0.1}>Actions</T><Down $w={16} $h={13} $ml={16} /></Button>
              </Buttons>
            </CardHead>
            <Columns>
              <Column $first>
                <Item label="Instance ID"><CopyLine /><div><T $s={21} $ml={5} $ls={0.03}>i-0bc782050e90a32a0 (Mini-project)</T></div></Item>
                <Item label="IPv6 address" ls={-0.1}><div><T>–</T></div></Item>
                <Item label="Hostname type" ls={0.03}><div><T $s={21} $ls={-0.25}>{'IP name: '}</T><T $s={21} $ls={0.14}>ip-172-31-95-29.ec2.internal</T></div></Item>
                <Item label="Answer private resource DNS name" />
              </Column>
              <Column>
                <Item label="Public IPv4 address" ls={-0.07}><CopyLine /><div><T $s={21} $ml={5} $ls={0.08}>54.172.93.34</T><T $s={21} $ls={-1.2}>{' | '}</T><T $ls={-0.42} $c="#0073bb">open address</T><Gap $w={7} /><Ext /></div></Item>
                <Item label="Instance state" ls={-0.15}><div>
                  <svg width="24" height="24" viewBox="0 0 24 24" fill="none" stroke="#1d8102" strokeWidth="2.800"><circle cx="12" cy="12" r="10.500" /><path d="M6.500 12 L10.500 16 L17.500 9" /></svg>
                  <T $ml={6} $c="#1d8102">Running</T></div></Item>
                <Item label="Private IP DNS name (IPv4 only)" ls={0.1}><CopyLine /><div><T $s={21} $ml={5} $ls={0.14}>ip-172-31-95-29.ec2.internal</T></div></Item>
                <Item label="Instance type" ls={-0.2} />
              </Column>
              <Column>
                <Item label="Private IPv4 addresses" ls={-0.13}><CopyLine /><div><T $s={21} $ml={5} $ls={0.08}>172.31.95.29</T></div></Item>
                <Item label="Public IPv4 DNS" ls={0.05}><CopyLine /><div><T $s={21} $ml={5} $ls={0.19}>ec2-54-172-93-34.compute-</T></div><div><T $ls={-0.3}>1.amazonaws.com</T><T $s={21} $ls={-1.2}>{' | '}</T><T $ls={-0.42} $c="#0073bb">open address</T><Gap $w={7} /><Ext /></div></Item>
                <Item label="" />
                <Item label="Elastic IP addresses" ls={-0.17} />
              </Column>
            </Columns>
          </Card>
        </Content>
        <Track><Arrow /><Thumb $h={138} /><Arrow $down /></Track>
        <Track><Arrow /><Thumb $h={608} /><Arrow $down /></Track>
      </Body>

      <Footer>
        <T $s={17.5} $w={600} $ls={-0.45}>Feedback</T>
        <T $s={17.5} $ls={0.1} $ml={37} $c="#95a5a6">{'Looking for language selection? Find it in the new '}</T>
        <T $s={17.5} $w={600} $ls={-0.1}>Unified Settings</T><Gap $w={5} /><Ext c="#fff" />
        <Push>
          <T $s={17.5} $w={600} $ls={-0.26}>© 2022, Amazon Web Services, Inc. or its affiliates.</T>
          <T $s={17.5} $w={600} $ls={-0.25} $ml={48}>Privacy</T>
          <T $s={17.5} $w={600} $ls={-0.4} $ml={37}>Terms</T>
          <T $s={17.5} $w={600} $ls={-0.43} $ml={38}>Cookie preferences</T>
        </Push>
      </Footer>
      <Downloads>
        <DownloadItem>
          <svg width="17" height="22" viewBox="0 0 17 22"><path d="M0 0 H12 L17 5 V22 H0Z" fill="#f6f6f6" /><path d="M12 0 V5 H17" stroke="#888" fill="none" /><path d="M3 7.500H13M3 10.500H8M3 13.500H13M3 16.500H10" stroke="#9a9a9a" strokeWidth="1.200" /></svg>
          <T $s={18.5} $ml={24}>lara-key.pem</T>
          <CaretSlot><svg width="14" height="9" viewBox="0 0 14 9"><path d="M1 8 L7 1.800 L13 8" stroke="#fff" strokeWidth="2.200" fill="none" /></svg></CaretSlot>
        </DownloadItem>
        <ShowAll><T $s={17} $w={600} $ls={0}>Show all</T></ShowAll>
        <CloseShelf><Cross s={14} w={2.5} /></CloseShelf>
      </Downloads>
      <Taskbar>
        <Sun />
        <Weather><T $s={17} $ls={-0.4}>31°C</T><T $s={17.5} $c="#bdbcbd">Sunny</T></Weather>
        <Apps>
          {apps.map((a, i) => <AppButton key={i} $active={a.active}>{a.el}{(a.on || a.active) && <Indicator $active={a.active} />}</AppButton>)}
        </Apps>
        <Tray>
          <svg width="19" height="12" viewBox="0 0 19 12" fill="none" stroke="#fff" strokeWidth="1.600"><path d="M1 10.500 L9.500 1.500 L18 10.500" /></svg>
          <Gap $w={26} />
          <svg width="25" height="18" viewBox="0 0 25 18"><path d="M7 8 A6.500 6.500 0 0 1 19 4 L22 9 L8 12Z" fill="#a8a3a4" /><path d="M5 17.500 A5 5 0 0 1 4.500 8 Q8 5 12 8 L17 10.500 Q24 8 25 14 Q25 17.500 21 17.500Z" fill="#f6f6f6" /></svg>
          <Stack $align="center" $w={50} $ml={20}><T $s={17.3} $ls={-0.1}>ENG</T><T $s={17.3} $ls={-0.3}>UK</T></Stack>
          <Gap $w={20} />
          <svg width="24" height="20" viewBox="0 0 24 20" fill="none" stroke="#fff" strokeWidth="1.700"><path d="M1 7 Q12 -4.500 23 7 M4 10.500 Q12 2 20 10.500 M7.500 14 Q12 9 16.500 14" /><circle cx="12" cy="17" r="2.200" fill="#fff" stroke="none" /></svg>
          <Gap $w={12} />
          <svg width="25" height="22" viewBox="0 0 25 22" fill="none" stroke="#fff" strokeWidth="1.600"><path d="M1 7.500 H5 L11 2 V20 L5 14.500 H1Z" strokeLinejoin="round" /><path d="M14 7 Q16.500 11 14 15 M17 4.500 Q21.500 11 17 17.500 M20 2 Q27 11 20 20" /></svg>
          <Gap $w={12} />
          <svg width="24" height="18" viewBox="0 0 24 18"><rect x="1" y="1" width="20" height="16" rx="3.500" fill="none" stroke="#fff" strokeWidth="1.700" /><rect x="3.500" y="3.500" width="12" height="11" rx="1.500" fill="#fff" /><path d="M22.700 6.500 V11.500" stroke="#fff" strokeWidth="2.400" strokeLinecap="round" /></svg>
          <Stack $align="flex-end" $w={94} $ml={18}><T $s={17.3} $ls={-0.3}>16:02</T><T $s={17.3} $ls={-0.2}>23/10/2022</T></Stack>
          <Gap $w={15} />
          <svg width="20" height="24" viewBox="0 0 20 24" fill="none" stroke="#fff" strokeWidth="1.700"><path d="M10 1.500 Q19.500 4 19 13 Q18 22 9.500 22.500 Q4 22.500 1 18.500 Q8 18 10 12.500 Q12 7 10 1.500Z" strokeLinejoin="round" /></svg>
        </Tray>
      </Taskbar>
      <Watermark>
        <T $s={27.3} $ls={0.75}>Activate Windows</T>
        <T $s={20.4} $ls={0.26}>Go to Settings to activate Windows.</T>
      </Watermark>
    </Screen>
  );
}
